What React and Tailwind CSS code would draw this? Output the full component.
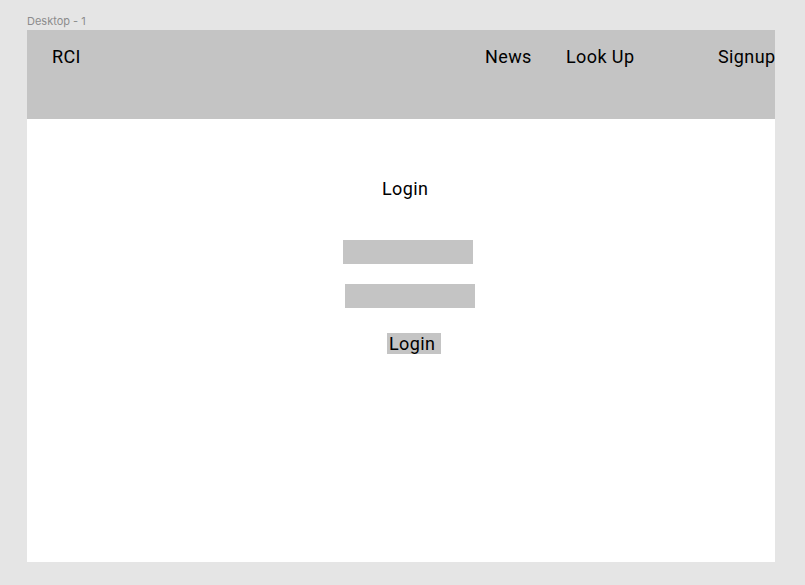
const Field = ({ offset }) => (
  <div className={`h-[24px] w-[130px] bg-[#c4c4c4] ${offset}`} />
);

const App = () => {
  return (
    <div className="min-h-[585px] w-full bg-[#e5e5e5] pl-[27px] pt-[15px] font-['Roboto',sans-serif] text-black">
      <div className="h-[13px] font-['Inter',sans-serif] text-[11px] leading-[13px] text-[#8c8c8c]">Desktop - 1</div>
      <div className="mt-[2px] flex h-[532px] w-[748px] flex-col overflow-hidden bg-white">
        <header className="flex h-[89px] shrink-0 bg-[#c4c4c4] pt-[16px] text-[18px] leading-[21px] tracking-[0.4px]">
          <div className="w-[458px] shrink-0 pl-[25px]">RCI</div>
          <div className="w-[81px] shrink-0">News</div>
          <div className="w-[152px] shrink-0">Look Up</div>
          <div className="shrink-0 whitespace-nowrap">Signup</div>
        </header>

        <main className="flex flex-col items-start text-[18px] leading-[21px] tracking-[0.4px]">
          <h1 className="ml-[355px] mt-[59px]">Login</h1>
          <Field offset="ml-[316px] mt-[41px]" />
          <Field offset="ml-[318px] mt-[20px]" />
          <button className="ml-[360px] mt-[25px] h-[21px] w-[54px] bg-[#c4c4c4] pl-[2px] text-left">
            Login
          </button>
        </main>
      </div>
    </div>
  );
};

export default App;
